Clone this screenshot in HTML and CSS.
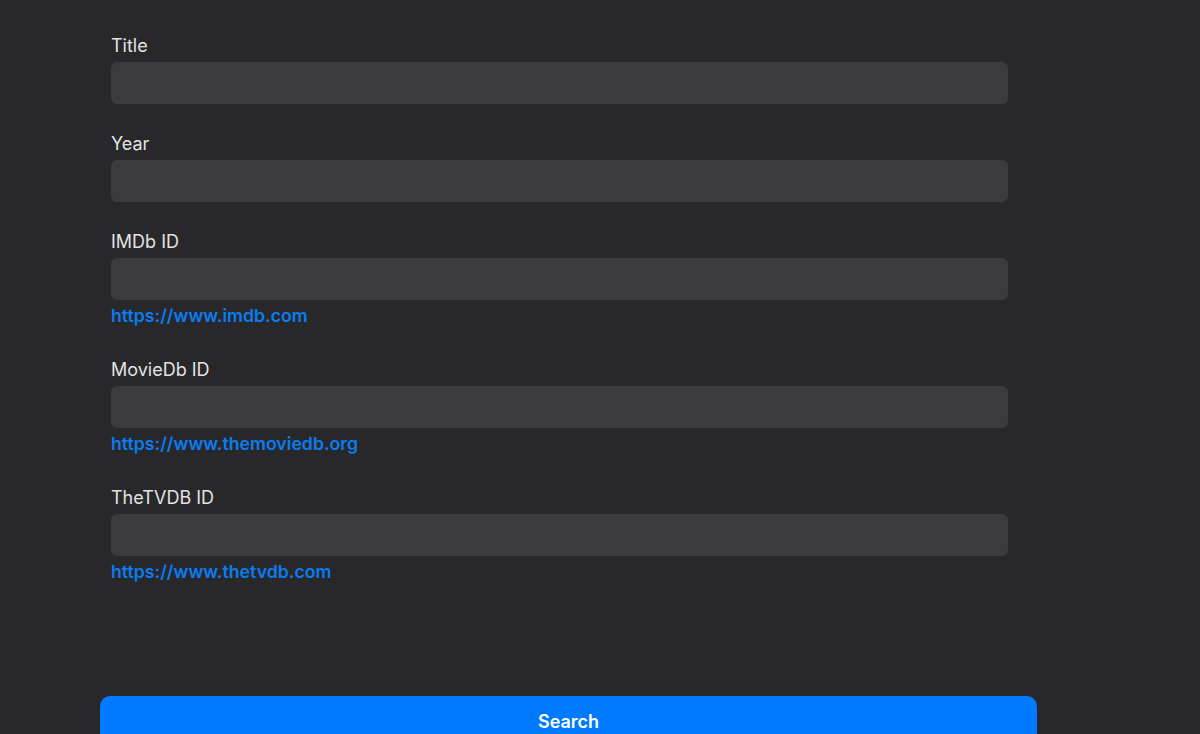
FILE: index.html
```html
<!DOCTYPE html>
<html>
<head>
<meta charset="utf-8">
<link rel="stylesheet" href="styles.css">
</head>
<body>
<div class="page">
  <form class="form">
    <div class="field">
      <label class="label">Title</label>
      <div class="input"></div>
    </div>
    <div class="field">
      <label class="label">Year</label>
      <div class="input"></div>
    </div>
    <div class="field">
      <label class="label">IMDb ID</label>
      <div class="input"></div>
      <a class="link">https://www.imdb.com</a>
    </div>
    <div class="field">
      <label class="label">MovieDb ID</label>
      <div class="input"></div>
      <a class="link">https://www.themoviedb.org</a>
    </div>
    <div class="field">
      <label class="label">TheTVDB ID</label>
      <div class="input"></div>
      <a class="link">https://www.thetvdb.com</a>
    </div>
  </form>
  <button class="search">Search</button>
</div>
</body>
</html>
```
FILE: styles.css
```css
html, body {
  margin: 0;
  padding: 0;
  background: #28282a;
  height: 100%;
  overflow: hidden;
}
body {
  font-family: Inter, "Noto Sans", sans-serif;
  color: #e2e2e4;
}
.page {
  width: 937px;
  margin-left: 100px;
  padding-top: 35px;
}
.form {
  padding-left: 11px;
  width: 897px;
  display: flex;
  flex-direction: column;
  gap: 29px;
}
.field {
  display: flex;
  flex-direction: column;
}
.label {
  font-size: 18px;
  line-height: 22px;
  margin-bottom: 5px;
}
.input {
  height: 42px;
  background: #3a3a3f;
  border-radius: 6px;
}
.link {
  margin-top: 2px;
  font-size: 17.7px;
  font-weight: 600;
  line-height: 28px;
  color: #0a7cf2;
}
.search {
  margin-top: 110px;
  width: 937px;
  height: 50px;
  border: 0;
  border-radius: 10px;
  background: #007aff;
  color: #ffffff;
  font-family: Inter, "Noto Sans", sans-serif;
  font-size: 18px;
  font-weight: 600;
  padding: 0;
}
```
